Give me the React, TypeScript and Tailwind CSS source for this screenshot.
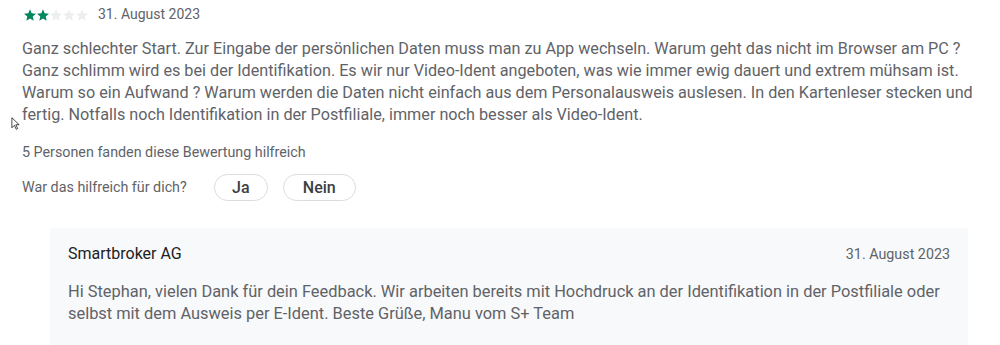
function Stars({ value }: { value: number }) {
  return (
    <div className="flex items-center gap-px">
      {Array.from({ length: 5 }).map((_, i) => (
        <svg key={i} viewBox="2 2 20 19" className="h-[12px] w-[12px]">
          <path
            d="M12 17.27 18.18 21l-1.64-7.03L22 9.24l-7.19-.61L12 2 9.19 8.63 2 9.24l5.46 4.73L5.82 21z"
            fill={i < value ? '#01875f' : '#eceef0'}
          />
        </svg>
      ))}
    </div>
  )
}

export default function App() {
  return (
    <div className="relative w-[1000px] h-[345px] overflow-hidden bg-white font-['Roboto',sans-serif]">
      {/* mouse cursor from the capture */}
      <svg viewBox="0 0 12 18" className="absolute left-[11px] top-[117px] h-[13px] w-[9px]">
        <path d="M1 1v14l3.5-3.5 2.5 5.5 2-1-2.5-5.3H11z" fill="#fff" stroke="#000" strokeWidth="1" strokeLinejoin="round" />
      </svg>

      <div className="pl-[22px] pr-[14px] pt-[4px]">
        {/* Header */}
        <div className="flex items-center gap-[10px] pl-[2px]">
          <Stars value={2} />
          <span className="text-[14px] text-[#5f6368]">31. August 2023</span>
        </div>

        {/* Review body */}
        <p className="mt-[13px] text-[16.2px] leading-[22px] text-[#5f6368]">
          Ganz schlechter Start. Zur Eingabe der persönlichen Daten muss man zu App wechseln. Warum geht das nicht im Browser am PC ?
          Ganz schlimm wird es bei der Identifikation. Es wir nur Video-Ident angeboten, was wie immer ewig dauert und extrem mühsam ist.
          Warum so ein Aufwand ? Warum werden die Daten nicht einfach aus dem Personalausweis auslesen. In den Kartenleser stecken und
          fertig. Notfalls noch Identifikation in der Postfiliale, immer noch besser als Video-Ident.
        </p>

        <p className="mt-[16px] text-[14.3px] leading-[20px] text-[#5f6368]">5 Personen fanden diese Bewertung hilfreich</p>

        <div className="mt-[12px] flex items-center">
          <span className="text-[14.3px] text-[#5f6368]">War das hilfreich für dich?</span>
          <div className="ml-[27px] flex gap-[15px]">
            <button className="h-[27px] w-[54px] rounded-full border border-[#dadce0] text-[16px] font-medium text-[#3c4043]">
              Ja
            </button>
            <button className="h-[27px] w-[73px] rounded-full border border-[#dadce0] text-[16px] font-medium text-[#3c4043]">
              Nein
            </button>
          </div>
        </div>
      </div>

      {/* Developer reply */}
      <div className="ml-[50px] mt-[27px] w-[918px] bg-[#f8f9fa] px-[18px] pt-[14px] pb-[20px]">
        <div className="flex items-center justify-between leading-[24px]">
          <span className="text-[16px] text-[#202124]">Smartbroker AG</span>
          <span className="text-[14.3px] text-[#5f6368]">31. August 2023</span>
        </div>
        <p className="mt-[15px] text-[16.4px] leading-[22px] text-[#5f6368]">
          Hi Stephan, vielen Dank für dein Feedback. Wir arbeiten bereits mit Hochdruck an der Identifikation in der Postfiliale oder
          selbst mit dem Ausweis per E-Ident. Beste Grüße, Manu vom S+ Team
        </p>
      </div>
    </div>
  )
}
